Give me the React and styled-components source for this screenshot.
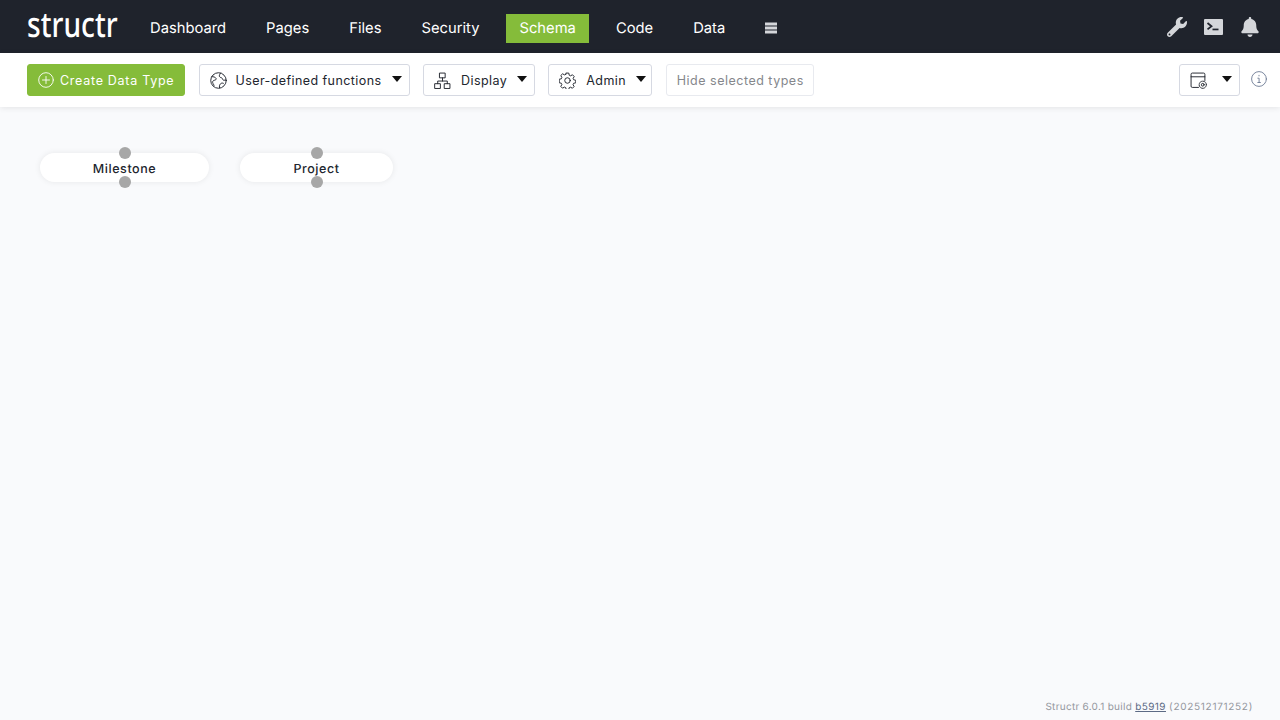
import React from 'react';
import styled, { createGlobalStyle } from 'styled-components';
import { FaWrench, FaBell } from 'react-icons/fa';

const GlobalStyle = createGlobalStyle`
  html, body {
    margin: 0;
    height: 100%;
    background: #f9fafc;
    font-family: Inter, "Liberation Sans", sans-serif;
    text-rendering: geometricPrecision;
  }
  #root {
    height: 100%;
  }
`;

const Page = styled.div`
  display: flex;
  flex-direction: column;
  height: 720px;
  overflow: hidden;
`;

const Header = styled.header`
  display: flex;
  align-items: center;
  height: 53px;
  padding: 0 20px 0 27px;
  background: #1f232c;
  color: #fff;
`;

const Logo = styled.div`
  width: 90px;
  margin-right: 20px;
  font-family: "Noto Sans", sans-serif;
  font-size: 35px;
  font-weight: 500;
  line-height: 53px;
  white-space: nowrap;
  transform: translateY(-2px) scaleX(0.805);
  transform-origin: left center;
`;

const Nav = styled.nav`
  display: flex;
  gap: 14px;
  flex: 1;
  margin-top: 4px;
`;

const NavItem = styled.a`
  display: flex;
  align-items: center;
  box-sizing: border-box;
  height: 29px;
  padding: 0 13px 2px;
  font-size: 14.76px;
  font-weight: 400;
  background: ${(p) => (p.$active ? '#85bc3a' : 'transparent')};
`;

const BarsIcon = styled.svg`
  display: block;
  width: 12px;
  height: 12px;
  fill: #d4d6da;
`;

const HeaderIcons = styled.div`
  display: flex;
  align-items: center;
  gap: 17px;
  color: #d4d6da;
`;

const Toolbar = styled.div`
  display: flex;
  align-items: center;
  gap: 13.5px;
  height: 54px;
  padding: 0 13px 0 27px;
  background: #fff;
  box-shadow: 0 1px 6px rgba(0, 0, 0, 0.09);
  position: relative;
`;

const Button = styled.button`
  display: flex;
  align-items: center;
  box-sizing: border-box;
  height: 32px;
  margin: 0;
  padding: 0 10px;
  border: 1px solid #d6d9e2;
  border-radius: 3px;
  background: #fff;
  color: #22262e;
  font-family: inherit;
  font-size: 12.5px;
  letter-spacing: 0.42px;
  white-space: nowrap;
  svg {
    flex-shrink: 0;
  }
`;

const CreateButton = styled(Button)`
  gap: 6px;
  width: 158px;
  border-color: #85bc3a;
  background: #85bc3a;
  color: #fff;
  letter-spacing: 0.72px;
`;

const Dropdown = styled(Button)`
  width: ${(p) => p.$width}px;
  padding: 0 7px 0 10px;
  gap: ${(p) => p.$gap}px;
`;

const HideButton = styled(Button)`
  width: 148px;
  border-color: #e8eaef;
  color: #85878c;
  letter-spacing: 0.5px;
`;

const Caret = styled.span`
  width: 0;
  height: 0;
  margin-left: auto;
  border-left: 5.5px solid transparent;
  border-right: 5.5px solid transparent;
  border-top: 6px solid #111;
  transform: translateY(-1px);
`;

const ToolbarRight = styled.div`
  display: flex;
  align-items: center;
  gap: 11px;
  margin-left: auto;
`;

const InfoIcon = styled.span`
  display: block;
  height: 16px;
  margin-top: -3px;
`;

const Canvas = styled.main`
  position: relative;
  flex: 1;
`;

const SchemaNode = styled.div`
  position: absolute;
  top: ${(p) => p.$y}px;
  left: ${(p) => p.$x}px;
  width: ${(p) => p.$width}px;
  height: 29px;
  border-radius: 15px;
  background: #fff;
  box-shadow: 0 0 6px rgba(0, 0, 0, 0.08);
  color: #22262e;
  font-size: 12.5px;
  font-weight: 500;
  line-height: 33px;
  letter-spacing: 0.55px;
  text-align: center;
`;

const Endpoint = styled.span`
  position: absolute;
  left: 50%;
  top: ${(p) => (p.$bottom ? '29px' : '0')};
  width: 12px;
  height: 12px;
  margin: -6px 0 0 -6px;
  border-radius: 50%;
  background: #a7a7a7;
`;

const Footer = styled.footer`
  position: absolute;
  right: 27px;
  bottom: 7px;
  color: #94979e;
  font-size: 10px;
  letter-spacing: 0.28px;
  a {
    color: #5c6a85;
    letter-spacing: 0.42px;
    text-decoration: underline;
  }
`;

const BuildDate = styled.span`
  letter-spacing: 0.7px;
`;

const LineIcon = ({ size = 16, children, color = 'currentColor' }) => (
  <svg width={size} height={size} viewBox="0 0 16 16" fill="none" stroke={color} strokeWidth="0.9" strokeLinecap="round" strokeLinejoin="round">
    {children}
  </svg>
);

const TerminalIcon = () => (
  <svg width="19" height="16" viewBox="0 0 19 16">
    <rect width="19" height="16" rx="1" fill="#d4d6da" />
    <path d="M3.5 4 L7.5 7.2 L3.5 10.4" fill="none" stroke="#1f232c" strokeWidth="1.8" />
    <rect x="8.5" y="9.6" width="6" height="1.7" fill="#1f232c" />
  </svg>
);

const schemaNodes = [
  { name: 'Milestone', x: 40, y: 46, width: 169 },
  { name: 'Project', x: 240, y: 46, width: 153 },
];

function App() {
  return (
    <Page>
      <GlobalStyle />
      <Header>
        <Logo>structr</Logo>
        <Nav>
          <NavItem>Dashboard</NavItem>
          <NavItem>Pages</NavItem>
          <NavItem>Files</NavItem>
          <NavItem>Security</NavItem>
          <NavItem $active>Schema</NavItem>
          <NavItem>Code</NavItem>
          <NavItem>Data</NavItem>
          <NavItem>
            <BarsIcon viewBox="0 0 12 12">
              <rect width="12" height="3" y="0.5" />
              <rect width="12" height="3" y="4.5" />
              <rect width="12" height="3" y="8.5" />
            </BarsIcon>
          </NavItem>
        </Nav>
        <HeaderIcons>
          <FaWrench size={20} />
          <TerminalIcon />
          <FaBell size={20} />
        </HeaderIcons>
      </Header>

      <Toolbar>
        <CreateButton>
          <LineIcon>
            <circle cx="8" cy="8" r="7.3" />
            <path d="M8 4.5v7M4.5 8h7" />
          </LineIcon>
          Create Data Type
        </CreateButton>
        <Dropdown $width={211} $gap={9}>
          <LineIcon size={17}>
            <circle cx="8" cy="8" r="7.3" />
            <path d="M1.500 4.500c1.800-.3 3.500.3 4.200 1.500.5 1-.6 1.700-1.700 1.800-1 .1-1.700 1-1.500 2.200.2 1 1 1.500 1.300 2.600M10 1c-.5 1-1.300 1.600-1.200 2.800.1 1 1 1.400 1.800 1.500 1 .2 1 1.200 1.500 2 .4.600 1.500.600 2.700.200M9 15c-.4-1.400-.1-2.800.8-3.800.8-.9 2-1 2.800-.6" />
          </LineIcon>
          User-defined functions
          <Caret />
        </Dropdown>
        <Dropdown $width={111.8} $gap={10}>
          <LineIcon size={17}>
            <rect x="5.500" y="1" width="5" height="4.500" />
            <rect x="1" y="11" width="5" height="4.500" />
            <rect x="10" y="11" width="5" height="4.500" />
            <path d="M8 5.500v3M3.500 11V8.500h9V11" />
          </LineIcon>
          Display
          <Caret />
        </Dropdown>
        <Dropdown $width={104} $gap={10}>
          <LineIcon size={17}>
            <circle cx="8" cy="8" r="2.600" />
            <path d="M6.800 1h2.400l.4 2 1.300.6 1.800-1 1.600 1.700-1 1.700.5 1.300 2 .5v2.400l-2 .4-.6 1.300 1 1.800-1.600 1.600-1.700-1-1.300.5-.5 2H6.800l-.4-2-1.300-.6-1.800 1-1.600-1.600 1-1.800-.5-1.200-2-.5V6.800l2-.4.500-1.300-1-1.800 1.700-1.600 1.700 1 1.300-.5z" />
          </LineIcon>
          Admin
          <Caret />
        </Dropdown>
        <HideButton>Hide selected types</HideButton>
        <ToolbarRight>
          <Dropdown $width={61} $gap={0}>
            <LineIcon size={17}>
              <path d="M8 14.500H2.200a1.200 1.200 0 0 1-1.200-1.200V2.200A1.200 1.200 0 0 1 2.200 1h10.600A1.200 1.200 0 0 1 14 2.200V8M1 4.500h13" />
              <circle cx="12" cy="12" r="1.300" />
              <circle cx="12" cy="12" r="3.400" strokeDasharray="1.700 1" />
            </LineIcon>
            <Caret />
          </Dropdown>
          <InfoIcon>
            <LineIcon size={16} color="#6d7b94">
              <circle cx="8" cy="8" r="7.400" />
              <path d="M6.800 7.200h1.300v4.300M6.800 11.500h2.600M8 4.300v.6" />
            </LineIcon>
          </InfoIcon>
        </ToolbarRight>
      </Toolbar>

      <Canvas>
        {schemaNodes.map((node) => (
          <SchemaNode key={node.name} $x={node.x} $y={node.y} $width={node.width}>
            <Endpoint />
            {node.name}
            <Endpoint $bottom />
          </SchemaNode>
        ))}
        <Footer>
          Structr 6.0.1 build <a>b5919</a> <BuildDate>(202512171252)</BuildDate>
        </Footer>
      </Canvas>
    </Page>
  );
}

export default App;
